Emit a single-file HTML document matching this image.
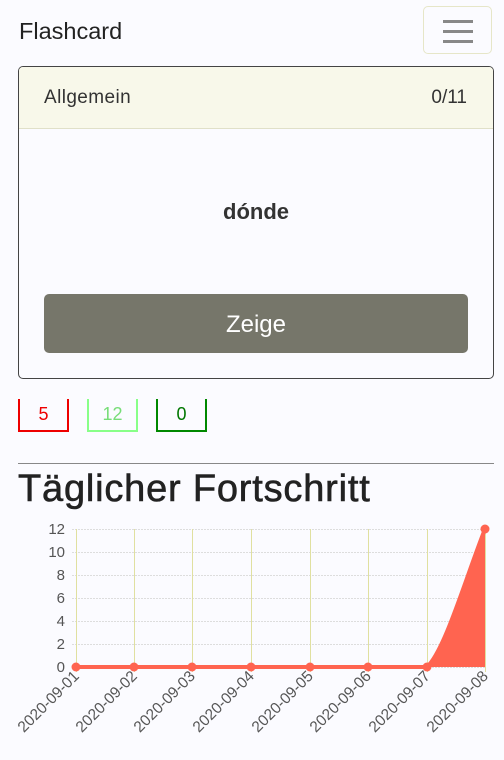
<!DOCTYPE html>
<html><head><meta charset="utf-8"><style>
body{margin:0;width:504px;height:760px;background:#fbfbff;font-family:"Liberation Sans",sans-serif;position:relative;overflow:hidden;color:#222}
.a{position:absolute}
</style></head><body>
<div class="a" style="left:19px;top:18px;font-size:23.5px;color:#222">Flashcard</div>
<div class="a" style="left:423px;top:6px;width:69px;height:48px;border:1px solid #e6e6c8;border-radius:5px;box-sizing:border-box"></div>
<div class="a" style="left:443px;top:20px;width:30px;height:3px;background:#888"></div>
<div class="a" style="left:443px;top:30px;width:30px;height:3px;background:#888"></div>
<div class="a" style="left:443px;top:40px;width:30px;height:3px;background:#888"></div>

<div class="a" style="left:18px;top:66px;width:476px;height:313px;border:1px solid #444;border-radius:5px;box-sizing:border-box;overflow:hidden">
  <div style="height:62px;background:#f8f8ea;border-bottom:1px solid #e0e0c8;box-sizing:border-box;position:relative">
    <div class="a" style="left:25px;top:20px;font-size:19px;letter-spacing:0.4px;color:#333">Allgemein</div>
    <div class="a" style="right:26px;top:20px;font-size:19px;color:#333">0/11</div>
  </div>
  <div class="a" style="left:0;right:0;top:132px;text-align:center;font-size:22px;font-weight:bold;color:#333">dónde</div>
  <div class="a" style="left:25px;top:227px;width:424px;height:59px;background:#76766a;border-radius:5px;color:#fff;font-size:24px;text-align:center;line-height:62px">Zeige</div>
</div>

<div class="a" style="left:18px;top:399px;width:51px;height:33px;border:2px solid #e00;border-top:none;box-sizing:border-box;color:#e00;text-align:center;font-size:18px;line-height:31px">5</div>
<div class="a" style="left:87px;top:399px;width:51px;height:33px;border:2px solid #8f8;border-top:none;box-sizing:border-box;color:#7d7;text-align:center;font-size:18px;line-height:31px">12</div>
<div class="a" style="left:156px;top:399px;width:51px;height:33px;border:2px solid #080;border-top:none;box-sizing:border-box;color:#070;text-align:center;font-size:18px;line-height:31px">0</div>

<div class="a" style="left:18px;top:463px;width:476px;height:1px;background:#888"></div>
<div class="a" style="left:18px;top:468px;font-size:38px;letter-spacing:0.8px;color:#222;-webkit-text-stroke:0.6px #222">Täglicher Fortschritt</div>

<svg class="a" style="left:0;top:0" width="504" height="760">
<g stroke="#ddd" stroke-width="1" stroke-dasharray="2,1">
<line x1="72" y1="529.5" x2="485" y2="529.5"/><line x1="72" y1="552.5" x2="485" y2="552.5"/><line x1="72" y1="575.5" x2="485" y2="575.5"/><line x1="72" y1="598.5" x2="485" y2="598.5"/><line x1="72" y1="621.5" x2="485" y2="621.5"/><line x1="72" y1="644.5" x2="485" y2="644.5"/><line x1="72" y1="667.5" x2="485" y2="667.5"/>
</g>
<g stroke="#e0e0a0" stroke-width="1">
<line x1="76.5" y1="529" x2="76.5" y2="672"/><line x1="134.5" y1="529" x2="134.5" y2="672"/><line x1="192.5" y1="529" x2="192.5" y2="672"/><line x1="251.5" y1="529" x2="251.5" y2="672"/><line x1="310.5" y1="529" x2="310.5" y2="672"/><line x1="368.5" y1="529" x2="368.5" y2="672"/><line x1="427.5" y1="529" x2="427.5" y2="672"/><line x1="485.5" y1="529" x2="485.5" y2="672"/>
</g>
<g font-size="15" fill="#555" text-anchor="end" font-family="Liberation Sans,sans-serif">
<text x="65" y="534">12</text><text x="65" y="557">10</text><text x="65" y="580">8</text><text x="65" y="603">6</text><text x="65" y="626">4</text><text x="65" y="649">2</text><text x="65" y="672">0</text>
</g>
<path d="M427 667 C445 650 465 580 485 529 L485 667 Z" fill="#ff6450"/>
<path d="M76 667 L427 667 C445 650 465 580 485 529" stroke="#ff6450" stroke-width="4" fill="none"/>
<g fill="#ff6450"><circle cx="76" cy="667" r="4.5"/><circle cx="134" cy="667" r="4.5"/><circle cx="192" cy="667" r="4.5"/><circle cx="251" cy="667" r="4.5"/><circle cx="310" cy="667" r="4.5"/><circle cx="368" cy="667" r="4.5"/><circle cx="427" cy="667" r="4.5"/><circle cx="485" cy="529" r="4.5"/></g>
<g font-size="15.5" fill="#555" text-anchor="end" font-family="Liberation Sans,sans-serif">
<text transform="translate(80,677) rotate(-45)">2020-09-01</text>
<text transform="translate(138,677) rotate(-45)">2020-09-02</text>
<text transform="translate(196,677) rotate(-45)">2020-09-03</text>
<text transform="translate(255,677) rotate(-45)">2020-09-04</text>
<text transform="translate(314,677) rotate(-45)">2020-09-05</text>
<text transform="translate(372,677) rotate(-45)">2020-09-06</text>
<text transform="translate(431,677) rotate(-45)">2020-09-07</text>
<text transform="translate(489,677) rotate(-45)">2020-09-08</text>
</g>
</svg>
</body></html>
